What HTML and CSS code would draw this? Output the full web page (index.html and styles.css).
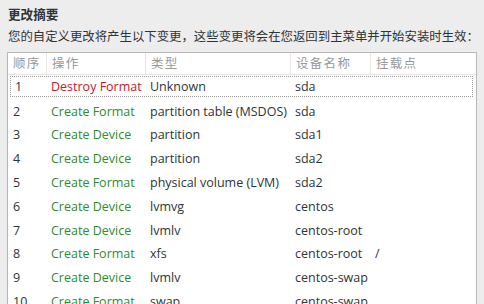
FILE: index.html
```html
<!DOCTYPE html>
<html>
<head>
<meta charset="utf-8">
<link rel="stylesheet" href="styles.css">
</head>
<body>
<div class="page">
  <div class="title">更改摘要</div>
  <div class="desc">您的自定义更改将产生以下变更，这些变更将会在您返回到主菜单并开始安装时生效：</div>
  <div class="frame">
    <div class="row head">
      <div class="c c1">顺序</div>
      <div class="c c2">操作</div>
      <div class="c c3">类型</div>
      <div class="c c4">设备名称</div>
      <div class="c c5">挂载点</div>
    </div>
    <div class="body">
      <div class="row sel"><div class="c">1</div><div class="c red">Destroy Format</div><div class="c">Unknown</div><div class="c">sda</div><div class="c"></div></div>
      <div class="row"><div class="c">2</div><div class="c green">Create Format</div><div class="c">partition table (MSDOS)</div><div class="c">sda</div><div class="c"></div></div>
      <div class="row"><div class="c">3</div><div class="c green">Create Device</div><div class="c">partition</div><div class="c">sda1</div><div class="c"></div></div>
      <div class="row"><div class="c">4</div><div class="c green">Create Device</div><div class="c">partition</div><div class="c">sda2</div><div class="c"></div></div>
      <div class="row"><div class="c">5</div><div class="c green">Create Format</div><div class="c">physical volume (LVM)</div><div class="c">sda2</div><div class="c"></div></div>
      <div class="row"><div class="c">6</div><div class="c green">Create Device</div><div class="c">lvmvg</div><div class="c">centos</div><div class="c"></div></div>
      <div class="row"><div class="c">7</div><div class="c green">Create Device</div><div class="c">lvmlv</div><div class="c">centos-root</div><div class="c"></div></div>
      <div class="row"><div class="c">8</div><div class="c green">Create Format</div><div class="c">xfs</div><div class="c">centos-root</div><div class="c">/</div></div>
      <div class="row"><div class="c">9</div><div class="c green">Create Device</div><div class="c">lvmlv</div><div class="c">centos-swap</div><div class="c"></div></div>
      <div class="row"><div class="c">10</div><div class="c green">Create Format</div><div class="c">swap</div><div class="c">centos-swap</div><div class="c"></div></div>
    </div>
  </div>
</div>
</body>
</html>
```

FILE: styles.css
```css
html, body {
  margin: 0;
  padding: 0;
  height: 304px;
  overflow: hidden;
  background: #ededed;
}
.page {
  padding: 6px 0 0 8px;
  font-family: "Open Sans", "Noto Sans CJK SC", sans-serif;
  font-size: 12.5px;
  color: #2e3436;
}
.title {
  font-weight: bold;
  font-size: 12.6px;
  line-height: 18px;
  height: 18px;
}
.desc {
  margin-top: 4px;
  font-size: 12.4px;
  line-height: 18px;
  height: 18px;
  white-space: nowrap;
}
.frame {
  margin-top: 6px;
  margin-left: -1px;
  width: 468px;
  height: 251px;
  overflow: hidden;
  background: #fff;
  border: 1px solid #b8b8b8;
}
.row {
  display: grid;
  grid-template-columns: 38px 99px 145px 80px 1fr;
  height: 23.8px;
  align-items: center;
}
.head {
  height: 21px;
  border-bottom: 1px solid #e4e4e4;
  color: #999;
  letter-spacing: 1.3px;
}
.head .c {
  height: 21px;
  line-height: 21px;
  border-left: 1px solid #e6e6e6;
}
.head .c1 { border-left: none; }
.body {
  padding-top: 1px;
}
.c {
  padding-left: 5px;
  white-space: nowrap;
  overflow: hidden;
  line-height: 20px;
}
.sel {
  margin: 0 3px 2.8px 2px;
  height: 21px;
  outline: 1px dotted #9a9a9a;
  outline-offset: -1px;
  grid-template-columns: 36px 99px 145px 80px 1fr;
}
.red { color: #c7162b; }
.green { color: #2e8b2e; }
```
